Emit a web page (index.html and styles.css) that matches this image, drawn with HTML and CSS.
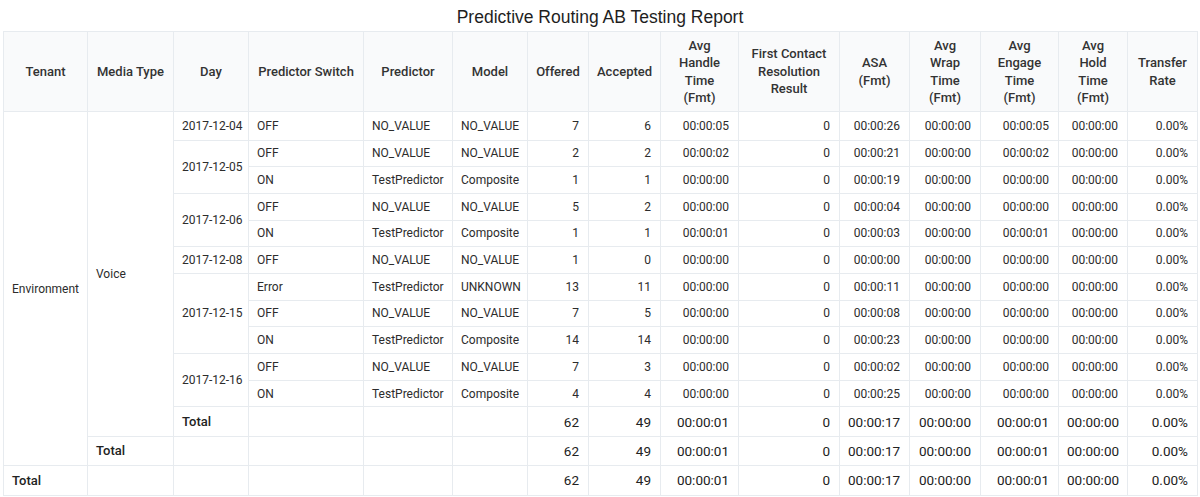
FILE: index.html
```html
<!DOCTYPE html>
<html>
<head>
<meta charset="utf-8">
<title>Predictive Routing AB Testing Report</title>
<link rel="stylesheet" href="styles.css">
</head>
<body>
<div class="report">
  <div class="title">Predictive Routing AB Testing Report</div>
  <table class="grid">
    <colgroup>
      <col class="w-tenant"><col class="w-media"><col class="w-day"><col class="w-switch"><col class="w-pred">
      <col class="w-model"><col class="w-offered"><col class="w-accepted"><col class="w-handle"><col class="w-fcr">
      <col class="w-asa"><col class="w-wrap"><col class="w-engage"><col class="w-hold"><col class="w-transfer">
    </colgroup>
    <thead>
      <tr>
        <th>Tenant</th><th>Media Type</th><th>Day</th><th>Predictor Switch</th><th>Predictor</th>
        <th>Model</th><th>Offered</th><th>Accepted</th><th>Avg<br>Handle<br>Time<br>(Fmt)</th>
        <th>First Contact<br>Resolution<br>Result</th><th>ASA<br>(Fmt)</th><th>Avg<br>Wrap<br>Time<br>(Fmt)</th>
        <th>Avg<br>Engage<br>Time<br>(Fmt)</th><th>Avg<br>Hold<br>Time<br>(Fmt)</th><th>Transfer<br>Rate</th>
      </tr>
    </thead>
    <tbody>
      <tr class="row first">
        <td rowspan="13" class="txt">Environment</td>
        <td rowspan="12" class="txt">Voice</td>
        <td class="txt">2017-12-04</td><td class="txt">OFF</td><td class="txt">NO_VALUE</td><td class="txt">NO_VALUE</td>
        <td class="num">7</td><td class="num">6</td><td class="num">00:00:05</td><td class="num">0</td><td class="num">00:00:26</td><td class="num">00:00:00</td><td class="num">00:00:05</td><td class="num">00:00:00</td><td class="num">0.00%</td>
      </tr>
      <tr class="row">
        <td rowspan="2" class="txt">2017-12-05</td><td class="txt">OFF</td><td class="txt">NO_VALUE</td><td class="txt">NO_VALUE</td>
        <td class="num">2</td><td class="num">2</td><td class="num">00:00:02</td><td class="num">0</td><td class="num">00:00:21</td><td class="num">00:00:00</td><td class="num">00:00:02</td><td class="num">00:00:00</td><td class="num">0.00%</td>
      </tr>
      <tr class="row">
        <td class="txt">ON</td><td class="txt">TestPredictor</td><td class="txt">Composite</td>
        <td class="num">1</td><td class="num">1</td><td class="num">00:00:00</td><td class="num">0</td><td class="num">00:00:19</td><td class="num">00:00:00</td><td class="num">00:00:00</td><td class="num">00:00:00</td><td class="num">0.00%</td>
      </tr>
      <tr class="row">
        <td rowspan="2" class="txt">2017-12-06</td><td class="txt">OFF</td><td class="txt">NO_VALUE</td><td class="txt">NO_VALUE</td>
        <td class="num">5</td><td class="num">2</td><td class="num">00:00:00</td><td class="num">0</td><td class="num">00:00:04</td><td class="num">00:00:00</td><td class="num">00:00:00</td><td class="num">00:00:00</td><td class="num">0.00%</td>
      </tr>
      <tr class="row">
        <td class="txt">ON</td><td class="txt">TestPredictor</td><td class="txt">Composite</td>
        <td class="num">1</td><td class="num">1</td><td class="num">00:00:01</td><td class="num">0</td><td class="num">00:00:03</td><td class="num">00:00:00</td><td class="num">00:00:01</td><td class="num">00:00:00</td><td class="num">0.00%</td>
      </tr>
      <tr class="row">
        <td class="txt">2017-12-08</td><td class="txt">OFF</td><td class="txt">NO_VALUE</td><td class="txt">NO_VALUE</td>
        <td class="num">1</td><td class="num">0</td><td class="num">00:00:00</td><td class="num">0</td><td class="num">00:00:00</td><td class="num">00:00:00</td><td class="num">00:00:00</td><td class="num">00:00:00</td><td class="num">0.00%</td>
      </tr>
      <tr class="row">
        <td rowspan="3" class="txt">2017-12-15</td><td class="txt">Error</td><td class="txt">TestPredictor</td><td class="txt">UNKNOWN</td>
        <td class="num">13</td><td class="num">11</td><td class="num">00:00:00</td><td class="num">0</td><td class="num">00:00:11</td><td class="num">00:00:00</td><td class="num">00:00:00</td><td class="num">00:00:00</td><td class="num">0.00%</td>
      </tr>
      <tr class="row">
        <td class="txt">OFF</td><td class="txt">NO_VALUE</td><td class="txt">NO_VALUE</td>
        <td class="num">7</td><td class="num">5</td><td class="num">00:00:00</td><td class="num">0</td><td class="num">00:00:08</td><td class="num">00:00:00</td><td class="num">00:00:00</td><td class="num">00:00:00</td><td class="num">0.00%</td>
      </tr>
      <tr class="row">
        <td class="txt">ON</td><td class="txt">TestPredictor</td><td class="txt">Composite</td>
        <td class="num">14</td><td class="num">14</td><td class="num">00:00:00</td><td class="num">0</td><td class="num">00:00:23</td><td class="num">00:00:00</td><td class="num">00:00:00</td><td class="num">00:00:00</td><td class="num">0.00%</td>
      </tr>
      <tr class="row">
        <td rowspan="2" class="txt">2017-12-16</td><td class="txt">OFF</td><td class="txt">NO_VALUE</td><td class="txt">NO_VALUE</td>
        <td class="num">7</td><td class="num">3</td><td class="num">00:00:00</td><td class="num">0</td><td class="num">00:00:02</td><td class="num">00:00:00</td><td class="num">00:00:00</td><td class="num">00:00:00</td><td class="num">0.00%</td>
      </tr>
      <tr class="row">
        <td class="txt">ON</td><td class="txt">TestPredictor</td><td class="txt">Composite</td>
        <td class="num">4</td><td class="num">4</td><td class="num">00:00:00</td><td class="num">0</td><td class="num">00:00:25</td><td class="num">00:00:00</td><td class="num">00:00:00</td><td class="num">00:00:00</td><td class="num">0.00%</td>
      </tr>
      <tr class="total">
        <td class="lbl">Total</td><td></td><td></td><td></td>
        <td class="num">62</td><td class="num">49</td><td class="num">00:00:01</td><td class="num">0</td><td class="num">00:00:17</td><td class="num">00:00:00</td><td class="num">00:00:01</td><td class="num">00:00:00</td><td class="num">0.00%</td>
      </tr>
      <tr class="total">
        <td class="lbl">Total</td><td></td><td></td><td></td><td></td>
        <td class="num">62</td><td class="num">49</td><td class="num">00:00:01</td><td class="num">0</td><td class="num">00:00:17</td><td class="num">00:00:00</td><td class="num">00:00:01</td><td class="num">00:00:00</td><td class="num">0.00%</td>
      </tr>
      <tr class="total">
        <td class="lbl">Total</td><td></td><td></td><td></td><td></td><td></td>
        <td class="num">62</td><td class="num">49</td><td class="num">00:00:01</td><td class="num">0</td><td class="num">00:00:17</td><td class="num">00:00:00</td><td class="num">00:00:01</td><td class="num">00:00:00</td><td class="num">0.00%</td>
      </tr>
    </tbody>
  </table>
</div>
</body>
</html>
```

FILE: styles.css
```css
html, body {
  margin: 0;
  padding: 0;
  background: #ffffff;
}

.report {
  padding: 0 3px;
  font-family: Roboto, "Liberation Sans", Arial, sans-serif;
  color: #2c2c2c;
}

.title {
  box-sizing: border-box;
  height: 31px;
  padding-top: 3px;
  line-height: 28px;
  text-align: center;
  font-family: "Liberation Sans", Arial, sans-serif;
  font-size: 17.5px;
  color: #1e1e1e;
}

.grid {
  width: 1194px;
  table-layout: fixed;
  border-collapse: collapse;
}

.w-tenant { width: 84px; }
.w-media { width: 86px; }
.w-day { width: 75px; }
.w-switch { width: 115px; }
.w-pred { width: 89px; }
.w-model { width: 75px; }
.w-offered { width: 61px; }
.w-accepted { width: 72px; }
.w-handle { width: 78px; }
.w-fcr { width: 101px; }
.w-asa { width: 70px; }
.w-wrap { width: 71px; }
.w-engage { width: 78px; }
.w-hold { width: 69px; }
.w-transfer { width: 70px; }

.grid th,
.grid td {
  border: 1px solid #e7ebef;
  padding: 0 8px;
  white-space: nowrap;
  overflow: hidden;
}

.grid th {
  height: 79px;
  background: #f9fafb;
  font-size: 13px;
  font-weight: 500;
  line-height: 17.5px;
  text-align: center;
  vertical-align: middle;
  color: #333333;
}

.grid td {
  font-size: 12px;
  font-weight: 400;
  vertical-align: middle;
}

.grid td.txt {
  text-align: left;
  font-weight: 400;
}

.grid td.num {
  text-align: right;
  padding-right: 9px;
}

.row td {
  height: 25.7px;
}

.row.first td {
  height: 27.5px;
}

.total td {
  height: 28.4px;
  font-size: 13.5px;
  font-weight: 400;
  color: #222222;
}

.total td.lbl {
  font-size: 13px;
  font-weight: 500;
}
```
